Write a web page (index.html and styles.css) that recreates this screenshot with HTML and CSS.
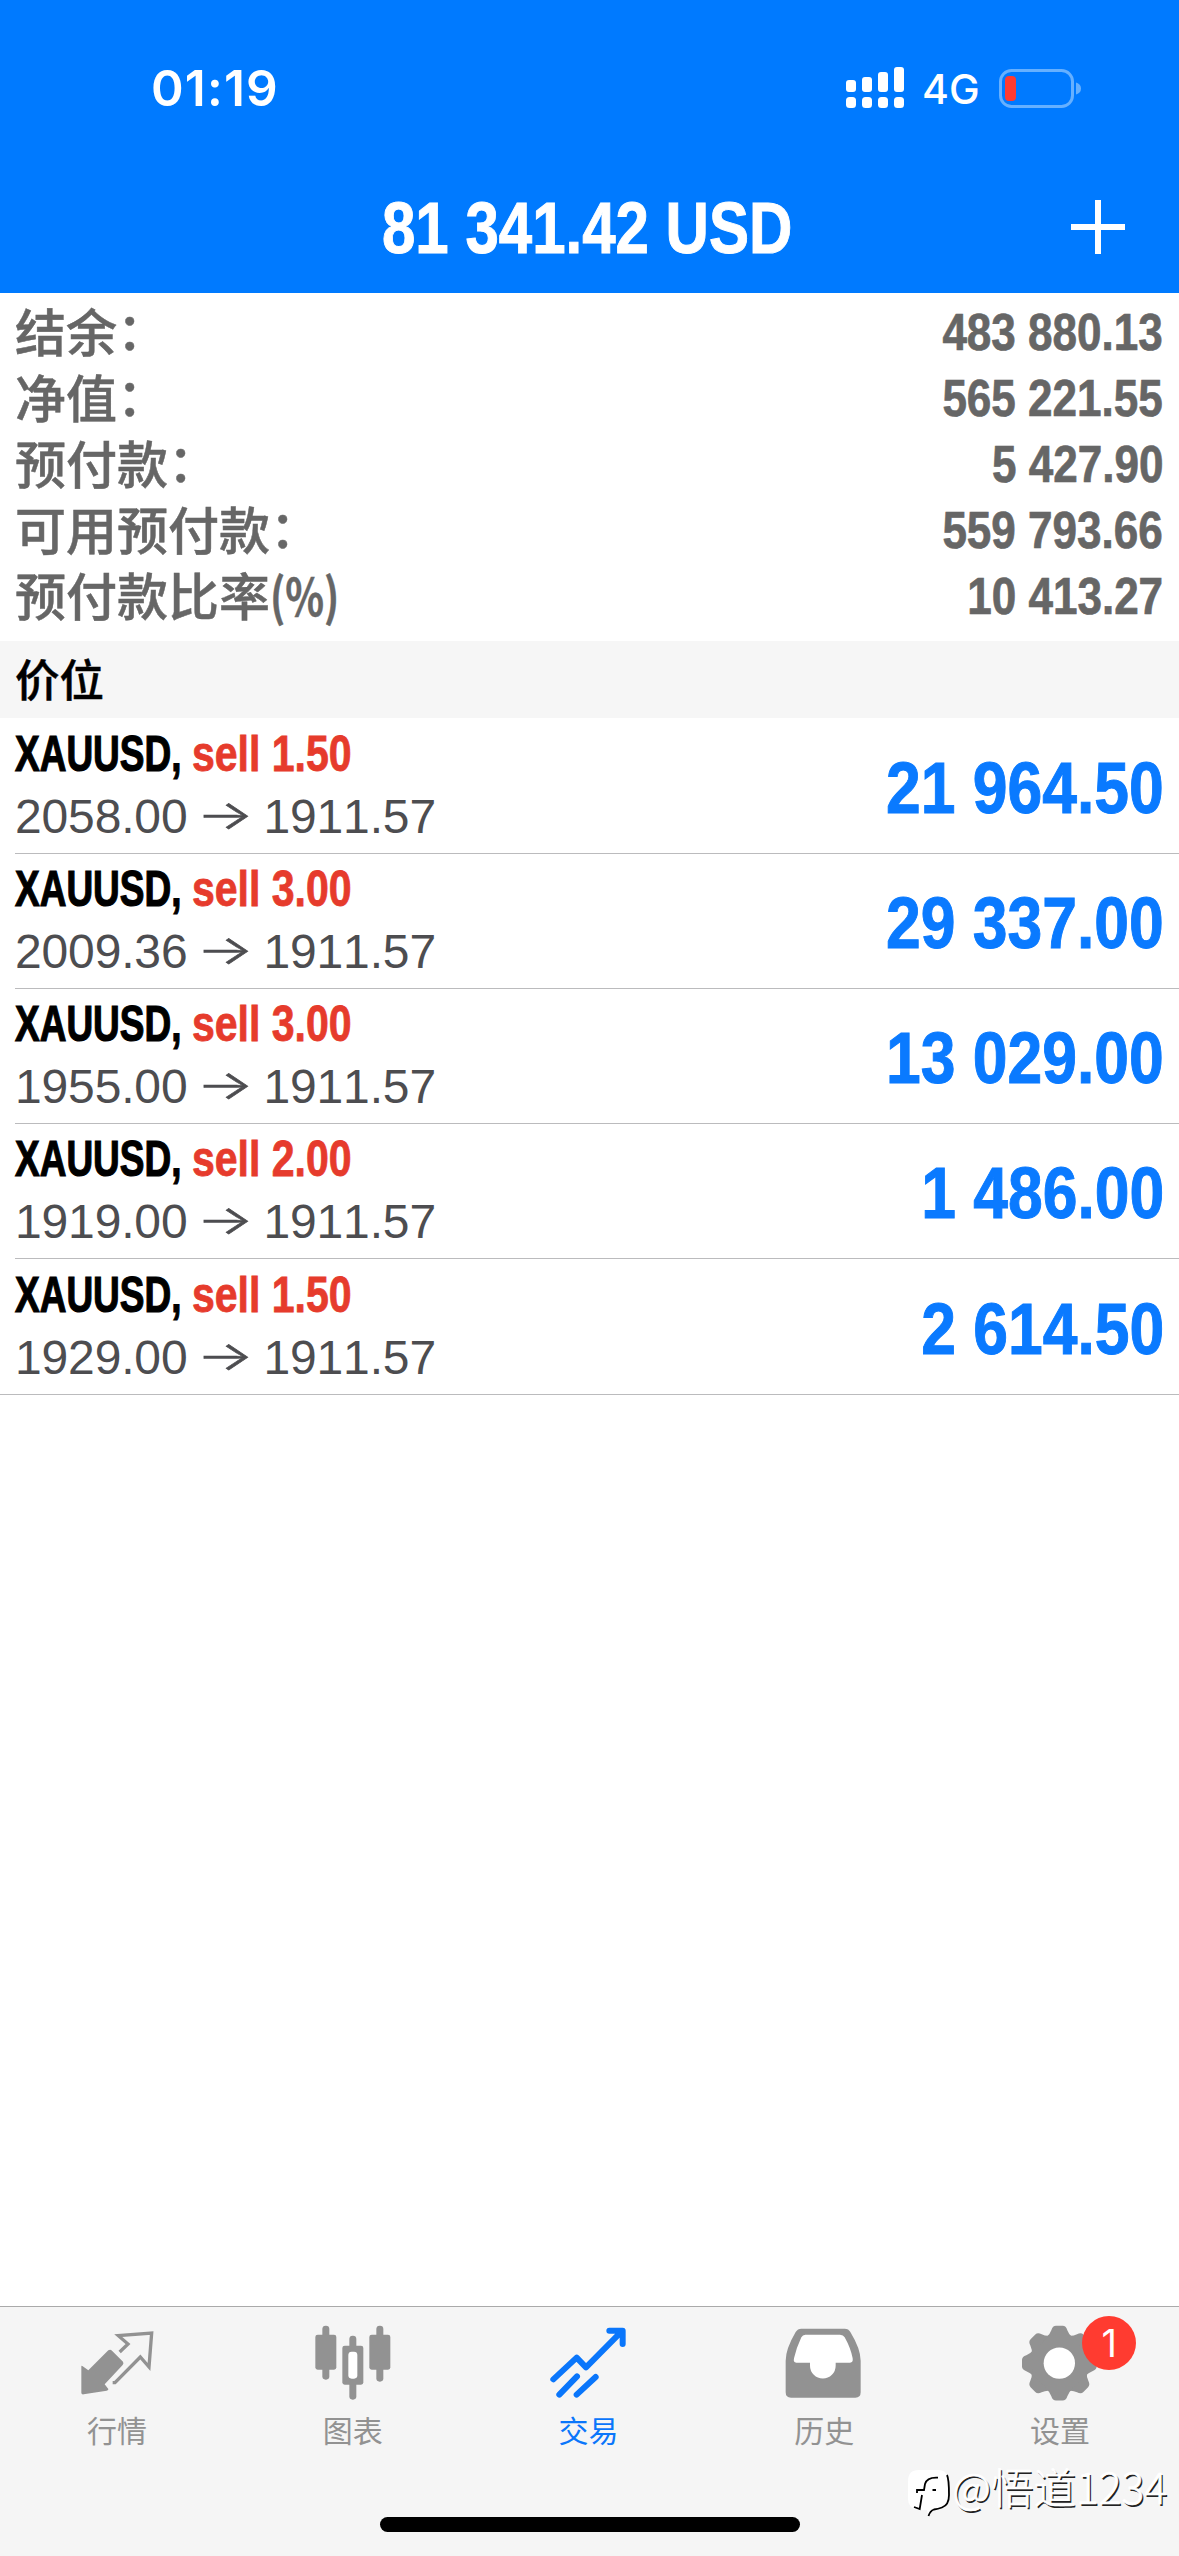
FILE: index.html
```html
<!DOCTYPE html>
<html lang="zh-CN">
<head>
<meta charset="utf-8">
<title>交易</title>
<link rel="stylesheet" href="styles.css">
</head>
<body>
<div class="app">
  <header class="header">
    <div class="status">
      <span class="time">01:19</span>
      <div class="status-right">
        <svg class="signal" viewBox="0 0 58 42"><g fill="#fff"><rect x="0" y="13" width="10" height="12" rx="3"/><rect x="16" y="10" width="10" height="15" rx="3"/><rect x="32" y="5" width="10" height="20" rx="3"/><rect x="48" y="0" width="10" height="25" rx="3"/><rect x="0" y="30" width="10" height="11" rx="3.5"/><rect x="16" y="30" width="10" height="11" rx="3.5"/><rect x="32" y="30" width="10" height="11" rx="3.5"/><rect x="48" y="30" width="10" height="11" rx="3.5"/></g></svg>
        <span class="network">4G</span>
        <svg class="battery" viewBox="0 0 82 39"><rect x="1.5" y="1.5" width="72" height="36" rx="11" fill="none" stroke="#66b0ff" stroke-width="3"/><path d="M77 13.500Q82 15 82 19.500T77 25.500Z" fill="#66b0ff"/><rect x="6" y="7" width="11" height="25" rx="4" fill="#ff3b30"/></svg>
      </div>
    </div>
    <div class="titlebar">
      <h1 class="title"><span class="cond">81 341.42 USD</span></h1>
      <svg class="plus" viewBox="0 0 54 54"><path d="M27 0V54M0 27H54" stroke="#fff" stroke-width="6"/></svg>
    </div>
  </header>

  <main class="main">
    <dl class="summary">
      <div class="line"><dt>结余<span class="colon">：</span></dt><dd>483 880.13</dd></div>
      <div class="line"><dt>净值<span class="colon">：</span></dt><dd>565 221.55</dd></div>
      <div class="line"><dt>预付款<span class="colon">：</span></dt><dd>5 427.90</dd></div>
      <div class="line"><dt>可用预付款<span class="colon">：</span></dt><dd>559 793.66</dd></div>
      <div class="line"><dt>预付款比率<span class="pct">(%)</span></dt><dd>10 413.27</dd></div>
    </dl>
    <h2 class="section">价位</h2>
    <ul class="positions">
      <li class="position"><div class="deal"><div class="order"><span class="symbol">XAUUSD,</span><span class="side">sell 1.50</span></div><div class="prices"><span>2058.00</span><span class="arrow">→</span><span>1911.57</span></div></div><span class="profit">21 964.50</span></li>
      <li class="position"><div class="deal"><div class="order"><span class="symbol">XAUUSD,</span><span class="side">sell 3.00</span></div><div class="prices"><span>2009.36</span><span class="arrow">→</span><span>1911.57</span></div></div><span class="profit">29 337.00</span></li>
      <li class="position"><div class="deal"><div class="order"><span class="symbol">XAUUSD,</span><span class="side">sell 3.00</span></div><div class="prices"><span>1955.00</span><span class="arrow">→</span><span>1911.57</span></div></div><span class="profit">13 029.00</span></li>
      <li class="position"><div class="deal"><div class="order"><span class="symbol">XAUUSD,</span><span class="side">sell 2.00</span></div><div class="prices"><span>1919.00</span><span class="arrow">→</span><span>1911.57</span></div></div><span class="profit">1 486.00</span></li>
      <li class="position"><div class="deal"><div class="order"><span class="symbol">XAUUSD,</span><span class="side">sell 1.50</span></div><div class="prices"><span>1929.00</span><span class="arrow">→</span><span>1911.57</span></div></div><span class="profit">2 614.50</span></li>
    </ul>
  </main>

  <nav class="tabs">
    <a class="tab">
      <svg class="icon" viewBox="234 100 240 240"><path d="M247 229L265 242L325 182Q331 178 336 183L369 216Q372 221 368 226L314 284L325 298Q326 302 320 303L251 314Q244 315 244 309V231Q244 226 247 229Z" fill="currentColor"/><path d="M359 187L384 163L355 138L455 130L447 232L421 202L345 279H338" fill="none" stroke="currentColor" stroke-width="10"/></svg>
      <span>行情</span>
    </a>
    <a class="tab">
      <svg class="icon" viewBox="941 100 240 240"><g fill="currentColor"><rect x="945" y="135" width="63" height="105" rx="7"/><rect x="966" y="108" width="21" height="162" rx="10"/><rect x="1107" y="135" width="63" height="105" rx="7"/><rect x="1128" y="108" width="21" height="168" rx="10"/><rect x="1026" y="168" width="63" height="117" rx="7"/><rect x="1047" y="138" width="21" height="192" rx="10"/></g><rect x="1044" y="186" width="27" height="81" rx="10" fill="#fff"/></svg>
      <span>图表</span>
    </a>
    <a class="tab active">
      <svg class="icon" viewBox="328 100 240 240"><path d="M341 269L411 204L439 233L546 125M509 123H549V163M359 315L412 260M411 315L468 262" fill="none" stroke="currentColor" stroke-width="18" stroke-linecap="round" stroke-linejoin="round"/></svg>
      <span>交易</span>
    </a>
    <a class="tab">
      <svg class="icon" viewBox="1036 100 240 240"><path d="M1085 117H1215Q1227 117 1232 127Q1263 178 1263 213V308Q1263 324 1247 324H1054Q1038 324 1038 308V213Q1038 178 1068 127Q1074 117 1085 117Z" fill="currentColor"/><path d="M1097 135H1201Q1211 135 1215 143Q1233 175 1239 206Q1241 219 1231 219H1188V228A38.500 38.500 0 0 1 1111 228V219H1070Q1060 219 1063 206Q1070 175 1085 143Q1089 135 1097 135Z" fill="#fff"/></svg>
      <span>历史</span>
    </a>
    <a class="tab">
      <svg class="icon" viewBox="603 100 240 240"><g fill="currentColor" transform="translate(718 220.500)"><circle r="88"/><g id="teeth"><path id="tooth" d="M-37 -80Q-29 -86 -24 -99Q-20 -112 -10 -112H10Q20 -112 24 -99Q29 -86 37 -80Z"/><use href="#tooth" transform="rotate(45)"/><use href="#tooth" transform="rotate(90)"/><use href="#tooth" transform="rotate(135)"/></g><use href="#teeth" transform="rotate(180)"/></g><circle cx="718" cy="220.500" r="47" fill="#fff"/></svg>
      <span class="badge">1</span>
      <span>设置</span>
    </a>
    <div class="home"></div>
  </nav>

  <div class="watermark">
    <svg viewBox="0 0 44 48"><path d="M12 1H31Q41 1 41 12V30Q41 40 30 41Q24 42 21 46L20 41H12Q1 40 1 30V12Q1 1 12 1Z" fill="#fff"/><path d="M31 8.700Q20 8 18 15L17 21H10V24M15 26L12.700 40L7 38M25.500 21H29M40 6Q42 10 42 26Q42 36 35 38.500Q31 40 27 40.500Q23 42 21.500 47" fill="none" stroke="#000" stroke-width="1.800"/></svg>
    <span>@悟道1234</span>
  </div>
</div>
</body>
</html>
```
FILE: styles.css
```css
* { box-sizing: border-box; }
body { margin: 0; background: #fff; font-family: "Liberation Sans", "Noto Sans CJK SC", sans-serif; }
h1, h2, dl, dd, ul { margin: 0; padding: 0; }
svg { display: block; flex: none; }
.app { position: relative; display: flex; flex-direction: column; width: 1179px; height: 2556px; overflow: hidden; }

.header { height: 293px; background: #007aff; color: #fff; }
.status { display: flex; justify-content: space-between; align-items: center; height: 176px; padding: 0 98px 0 151px; font-family: Inter, sans-serif; }
.time { font-size: 49.500px; font-weight: 600; letter-spacing: 1.2px; }
.status-right { display: flex; align-items: center; }
.signal { width: 58px; height: 42px; margin-left: -2px; }
.network { width: 57px; margin: 2px 20px 0 18px; font-size: 41px; font-weight: 500; white-space: nowrap; }
.battery { width: 82px; height: 39px; }
.titlebar { display: grid; grid-template-columns: 1fr auto 1fr; align-items: center; height: 104px; padding: 0 54px; }
.title { grid-column: 2; width: 416px; font-size: 73px; line-height: 104px; white-space: nowrap; font-kerning: none; }
.cond { display: inline-block; transform: scaleX(.822); transform-origin: left; -webkit-text-stroke: 1px; }
.plus { justify-self: end; width: 54px; height: 54px; margin-top: -3px; }

.main { flex: 1; }
.summary { height: 348px; padding: 6px 16px 0 15px; color: #666; }
.line { display: flex; justify-content: space-between; align-items: center; height: 66px; }
dt { margin-top: -5px; font: 500 51px/66px "Noto Sans CJK SC", sans-serif; -webkit-text-stroke: .5px; white-space: nowrap; }
.colon { line-height: 0; vertical-align: 2px; }
.pct { display: inline-block; font-weight: 700; transform: scaleX(.79); transform-origin: left; }
dd { font-size: 51.500px; font-weight: 700; line-height: 66px; transform: scaleX(.855); transform-origin: right; -webkit-text-stroke: .7px; }
.section { height: 77px; padding-left: 15px; background: #f6f6f6; font: 500 44.500px/74px "Noto Sans CJK SC", sans-serif; -webkit-text-stroke: .5px; }

.positions { padding-top: 1px; list-style: none; border-bottom: 1px solid #bbbbbd; }
.position { display: flex; justify-content: space-between; align-items: center; height: 135px; margin-left: 15px; padding-right: 15px; border-bottom: 1px solid #bbbbbd; }
.position:last-child { border-bottom: 0; }
.order { display: flex; height: 64px; font-size: 50px; font-weight: 700; line-height: 62px; white-space: nowrap; -webkit-text-stroke: 1.2px; }
.symbol { width: 177px; transform: scaleX(.74); transform-origin: left; }
.side { color: #e63b2c; transform: scaleX(.82); transform-origin: left; -webkit-text-stroke: .8px; }
.prices { display: flex; height: 62px; color: #4d4d50; font-size: 48px; line-height: 60px; letter-spacing: -.15px; font-kerning: none; }
.arrow { width: 76px; text-align: center; font: 300 40px/56px Inter, sans-serif; transform: scaleX(1.5); -webkit-text-stroke: .6px; }
.profit { padding-top: 3px; color: #0a7aff; font-size: 73px; font-weight: 700; white-space: nowrap; transform: scaleX(.855); transform-origin: right; -webkit-text-stroke: 1px; }

.tabs { position: relative; display: grid; grid-template-columns: repeat(5, 1fr); height: 250px; border-top: 1px solid #aaa; background: #f5f5f5; color: #929292; }
.tab { position: relative; display: flex; flex-direction: column; align-items: center; padding-top: 16px; font: 400 30px/44px "Noto Sans CJK SC", sans-serif; }
.tab .icon { width: 80px; height: 80px; margin-bottom: 4px; }
.tab > span:last-child { margin-left: -2px; }
.active { color: #0a76fb; }
.badge { position: absolute; left: 139px; top: 9px; width: 54px; height: 54px; border-radius: 50%; background: #ff3b30; color: #fff; font: 400 38px/54px Inter, sans-serif; text-align: center; }
.home { position: absolute; left: 380px; top: 210px; width: 420px; height: 15px; border-radius: 8px; background: #000; }

.watermark { position: absolute; right: 12px; top: 2469px; display: flex; color: #fff; font: 300 42.500px/34px "Noto Sans CJK SC", sans-serif; -webkit-text-stroke: .6px #fff; text-shadow: 1.5px 1.5px 0 #222; }
.watermark svg { width: 44px; height: 48px; margin-right: 1px; }
```
